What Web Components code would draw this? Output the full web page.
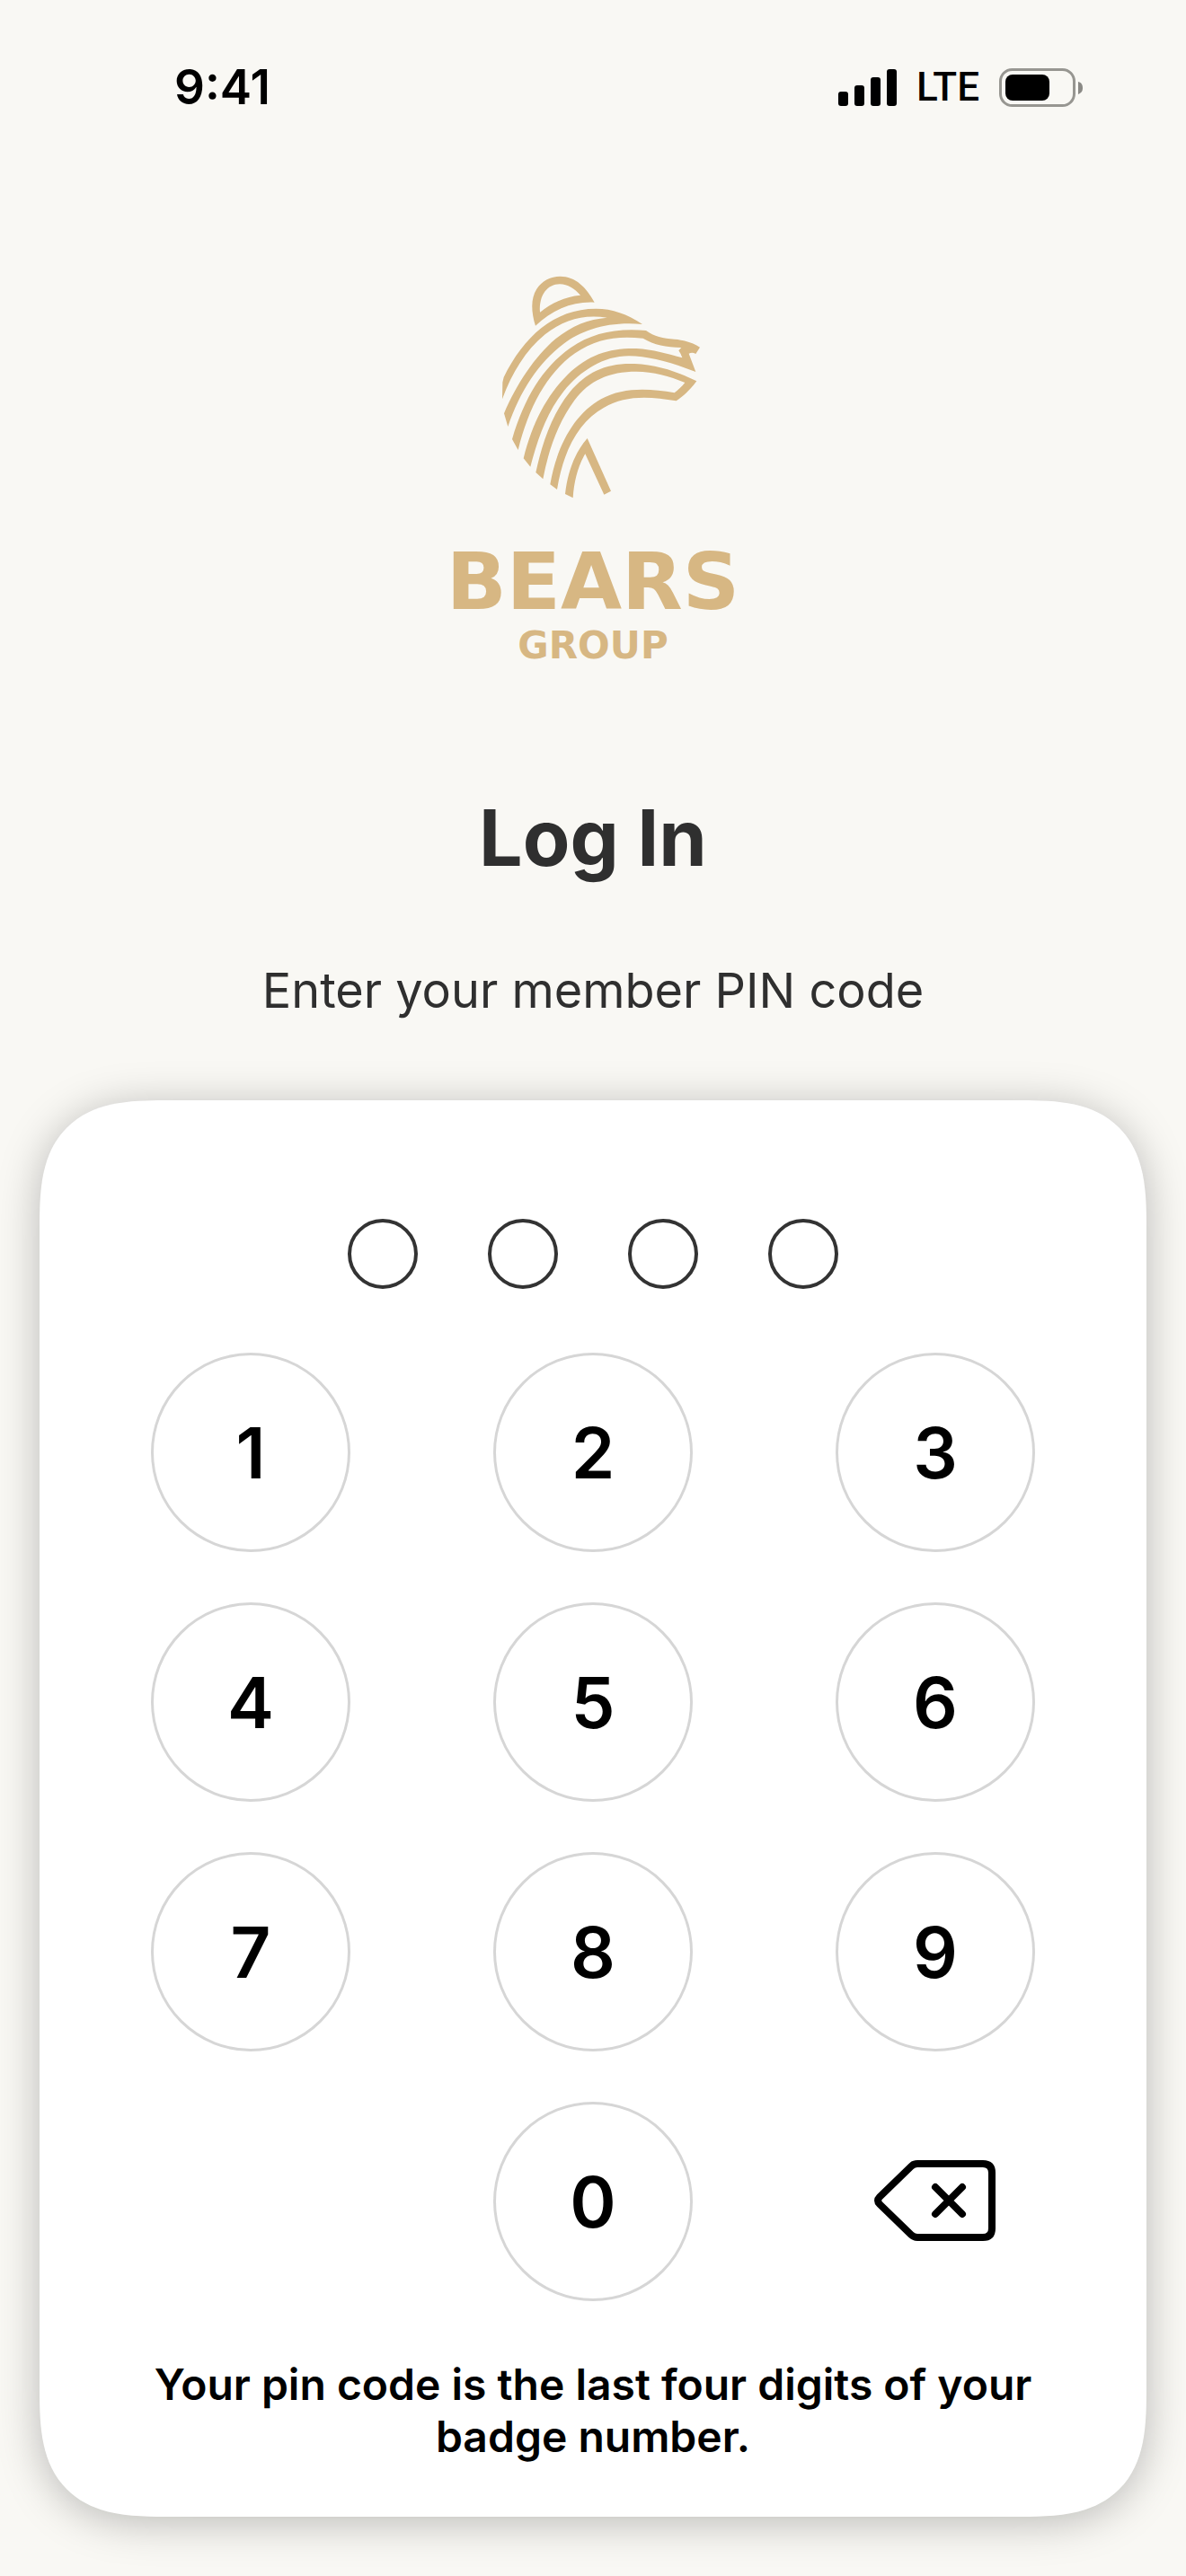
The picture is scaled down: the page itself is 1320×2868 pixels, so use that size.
<!DOCTYPE html>
<html lang="en">
<head>
<meta charset="UTF-8">
<meta name="viewport" content="width=device-width, initial-scale=1">
<title>Bears Group - Log In</title>
<style>
    body {
        margin: 0;
        background: #f9f8f4;
        font-family: Inter, "Liberation Sans", sans-serif;
    }
</style>
</head>
<body>
<login-screen></login-screen>

<script>
class StatusBar extends HTMLElement {
    constructor() {
        super();
        this.attachShadow({ mode: "open" });
    }

    connectedCallback() {
        this.render();
    }

    render() {
        this.shadowRoot.innerHTML = `
            <style>
                :host {
                    display: flex;
                    justify-content: space-between;
                    align-items: center;
                    height: 60px;
                    padding: 67px 114px 0 194px;
                    color: #000;
                }
                .time {
                    font-size: 53px;
                    line-height: 60px;
                    font-weight: 600;
                }
                .indicators {
                    display: flex;
                    align-items: center;
                    gap: 22px;
                }
                .network {
                    font-family: Roboto, sans-serif;
                    font-size: 44px;
                    line-height: 60px;
                    font-weight: 500;
                }
                svg { display: block; }
            </style>

            <span class="time">${this.getAttribute('time')}</span>
            <div class="indicators">
                <svg width="65" height="41" viewBox="0 0 65 41" role="img" aria-label="Signal strength">
                    <rect x="0" y="25" width="11" height="16" rx="3"/>
                    <rect x="18" y="18" width="11" height="23" rx="3"/>
                    <rect x="36" y="9" width="11" height="32" rx="3"/>
                    <rect x="54" y="0" width="11" height="41" rx="3"/>
                </svg>
                <span class="network">${this.getAttribute('network')}</span>
                <svg width="94" height="43" viewBox="0 0 94 43" role="img" aria-label="Battery">
                    <rect x="1.5" y="1.5" width="82" height="40" rx="13" fill="none" stroke="#979691" stroke-width="3"/>
                    <path d="M88 15c4 1 5 4 5 7s-1 5-5 7z" fill="#8a8985"/>
                    <rect x="7" y="7" width="49" height="29" rx="8"/>
                </svg>
            </div>
        `;
    }
}

class BearsLogo extends HTMLElement {
    constructor() {
        super();
        this.attachShadow({ mode: "open" });
    }

    connectedCallback() {
        this.render();
    }

    render() {
        this.shadowRoot.innerHTML = `
            <style>
                :host {
                    display: flex;
                    flex-direction: column;
                    align-items: center;
                    color: #d7b783;
                    font-family: "DejaVu Sans", sans-serif;
                    font-weight: 700;
                }
                svg {
                    display: block;
                    width: 260px;
                    height: 280px;
                }
                .name {
                    margin-top: 32px;
                    font-size: 88px;
                    line-height: 94px;
                }
                .unit {
                    font-size: 42px;
                    line-height: 48px;
                }
            </style>

            <svg viewBox="-30 0 780 840" fill="currentColor" aria-hidden="true">
                <!-- ear -->
                <path fill-rule="evenodd" d="M168 221C154 176 151 131 172 98C190 70 219 56 250 56C302 56 337 92 365 143C292 139 225 167 168 221ZM183 176C222 144 266 124 318 119C298 97 276 82 249 82C209 82 179 117 183 176Z"/>
                <!-- crown -->
                <path d="M57 466L58 410L62 393C128 258 230 164 370 164C425 164 474 182 525 216C410 206 325 235 262 281C180 342 115 440 76 558L63 514C105 415 165 325 235 265C290 220 345 199 407 194C330 182 262 200 200 250C135 303 90 378 57 466Z"/>
                <!-- muzzle -->
                <path d="M110 636L90 600C130 465 190 362 285 295C355 245 440 228 537 237C564 257 594 263 632 266C669 269 696 279 717 293L703 315C694 310 687 311 680 314L703 375C620 343 545 322 480 322C395 322 320 370 262 440C205 512 175 600 151 692L128 664C158 545 205 455 275 385C345 315 420 295 505 297C560 300 610 315 658 328C655 319 651 311 646 304L655 294C603 292 565 286 527 263C440 254 370 264 300 313C205 380 145 495 110 636Z"/>
                <!-- jaw -->
                <path d="M193 733L169 711C192 605 226 512 282 443C339 374 407 344 500 348C572 351 642 374 706 406C685 434 663 456 638 472C544 455 464 454 397 494C313 541 262 634 240 768L217 751C239 621 299 515 387 466C457 427 543 429 632 445C645 435 656 424 667 411C615 389 561 374 505 374C414 374 348 403 298 470C246 540 212 632 193 733Z"/>
                <!-- neck -->
                <path d="M293 796L267 783C276 706 299 646 341 597L420 773L397 785L334 649C309 691 297 740 293 796Z"/>
            </svg>
            <span class="name">BEARS</span>
            <span class="unit">GROUP</span>
        `;
    }
}

class PinDots extends HTMLElement {
    constructor() {
        super();
        this.attachShadow({ mode: "open" });
    }

    static get observedAttributes() {
        return ['filled'];
    }

    attributeChangedCallback() {
        this.render();
    }

    connectedCallback() {
        this.render();
    }

    buildDots() {
        const length = parseInt(this.getAttribute('length') || '4', 10);
        const filled = parseInt(this.getAttribute('filled') || '0', 10);
        let html = '';
        for (let i = 0; i < length; i++) {
            html += `<span class="dot${i < filled ? ' on' : ''}"></span>`;
        }
        return html;
    }

    render() {
        this.shadowRoot.innerHTML = `
            <style>
                :host {
                    display: flex;
                    justify-content: center;
                    gap: 78px;
                }
                .dot {
                    box-sizing: border-box;
                    width: 78px;
                    height: 78px;
                    border: 4px solid #333;
                    border-radius: 50%;
                }
                .on { background: #333; }
            </style>
            ${this.buildDots()}
        `;
    }
}

class PinKeypad extends HTMLElement {
    constructor() {
        super();
        this.attachShadow({ mode: "open" });
    }

    connectedCallback() {
        this.render();
        this.shadowRoot.addEventListener('click', (e) => {
            const button = e.target.closest('button');
            if (button) {
                this.dispatchEvent(new CustomEvent('pin-key', { detail: button.value, bubbles: true, composed: true }));
            }
        });
    }

    buildKeys() {
        return [1, 2, 3, 4, 5, 6, 7, 8, 9, 0]
            .map((n) => `<button type="button" class="key${n === 0 ? ' zero' : ''}" value="${n}">${n}</button>`)
            .join('');
    }

    render() {
        this.shadowRoot.innerHTML = `
            <style>
                :host {
                    display: grid;
                    grid-template-columns: repeat(3, 222px);
                    justify-content: space-between;
                    row-gap: 56px;
                }
                button {
                    box-sizing: border-box;
                    height: 222px;
                    padding: 0;
                    border: 3px solid #d6d6d6;
                    border-radius: 50%;
                    background: none;
                    color: #000;
                    font: inherit;
                    font-size: 78px;
                    font-weight: 600;
                    cursor: pointer;
                }
                .zero { grid-column: 2; }
                .delete {
                    display: flex;
                    align-items: center;
                    justify-content: center;
                    border: none;
                }
            </style>

            ${this.buildKeys()}
            <button type="button" class="delete" value="delete" aria-label="Delete">
                <svg width="138" height="94" viewBox="0 0 138 94" fill="none" stroke="#000" stroke-width="8" stroke-linecap="round" stroke-linejoin="round">
                    <path d="M49 5H122Q132 5 132 15V77Q132 87 122 87H49Q45 87 42 84L7 50Q3 46 7 42L42 8Q45 5 49 5Z"/>
                    <path d="M69 31L99 61M99 31L69 61"/>
                </svg>
            </button>
        `;
    }
}

class PinCard extends HTMLElement {
    constructor() {
        super();
        this.attachShadow({ mode: "open" });
    }

    connectedCallback() {
        this.render();
    }

    render() {
        this.shadowRoot.innerHTML = `
            <style>
                :host {
                    display: flex;
                    flex-direction: column;
                    padding: 132px 124px 60px;
                    background: #fff;
                    border-radius: 100px;
                    box-shadow: 0 6px 48px rgba(0, 0, 0, 0.26);
                }
                @supports (corner-shape: superellipse(1.5)) {
                    :host {
                        border-radius: 140px;
                        corner-shape: superellipse(1.5);
                    }
                }
            </style>
            <slot></slot>
        `;
    }
}

class LoginScreen extends HTMLElement {
    constructor() {
        super();
        this.attachShadow({ mode: "open" });
        this.pin = '';
    }

    connectedCallback() {
        this.render();
        this.dots = this.shadowRoot.querySelector('pin-dots');
        this.shadowRoot.addEventListener('pin-key', (e) => this.press(e.detail));
    }

    press(key) {
        if (key === 'delete') {
            this.pin = this.pin.slice(0, -1);
        } else if (this.pin.length < 4) {
            this.pin += key;
        }
        this.dots.setAttribute('filled', this.pin.length);
    }

    render() {
        this.shadowRoot.innerHTML = `
            <style>
                :host {
                    display: block;
                    color: #2f2f2f;
                    text-align: center;
                }
                bears-logo { margin-top: 162px; }
                h1 {
                    margin: 138px 0 0;
                    font-size: 86px;
                    line-height: 104px;
                    font-weight: 700;
                }
                .prompt {
                    margin: 84px 0 0;
                    font-size: 54px;
                    line-height: 68px;
                }
                pin-card { margin: 88px 44px 66px; }
                pin-keypad { margin-top: 71px; }
                .hint {
                    margin: 64px 0 0;
                    color: #000;
                    font-size: 48px;
                    line-height: 58px;
                    font-weight: 600;
                }
            </style>

            <status-bar time="9:41" network="LTE"></status-bar>
            <main>
                <bears-logo></bears-logo>
                <h1>Log In</h1>
                <p class="prompt">Enter your member PIN code</p>
                <pin-card>
                    <pin-dots length="4"></pin-dots>
                    <pin-keypad></pin-keypad>
                    <p class="hint">Your pin code is the last four digits of your badge number.</p>
                </pin-card>
            </main>
        `;
    }
}

customElements.define('status-bar', StatusBar);
customElements.define('bears-logo', BearsLogo);
customElements.define('pin-dots', PinDots);
customElements.define('pin-keypad', PinKeypad);
customElements.define('pin-card', PinCard);
customElements.define('login-screen', LoginScreen);
</script>
</body>
</html>
